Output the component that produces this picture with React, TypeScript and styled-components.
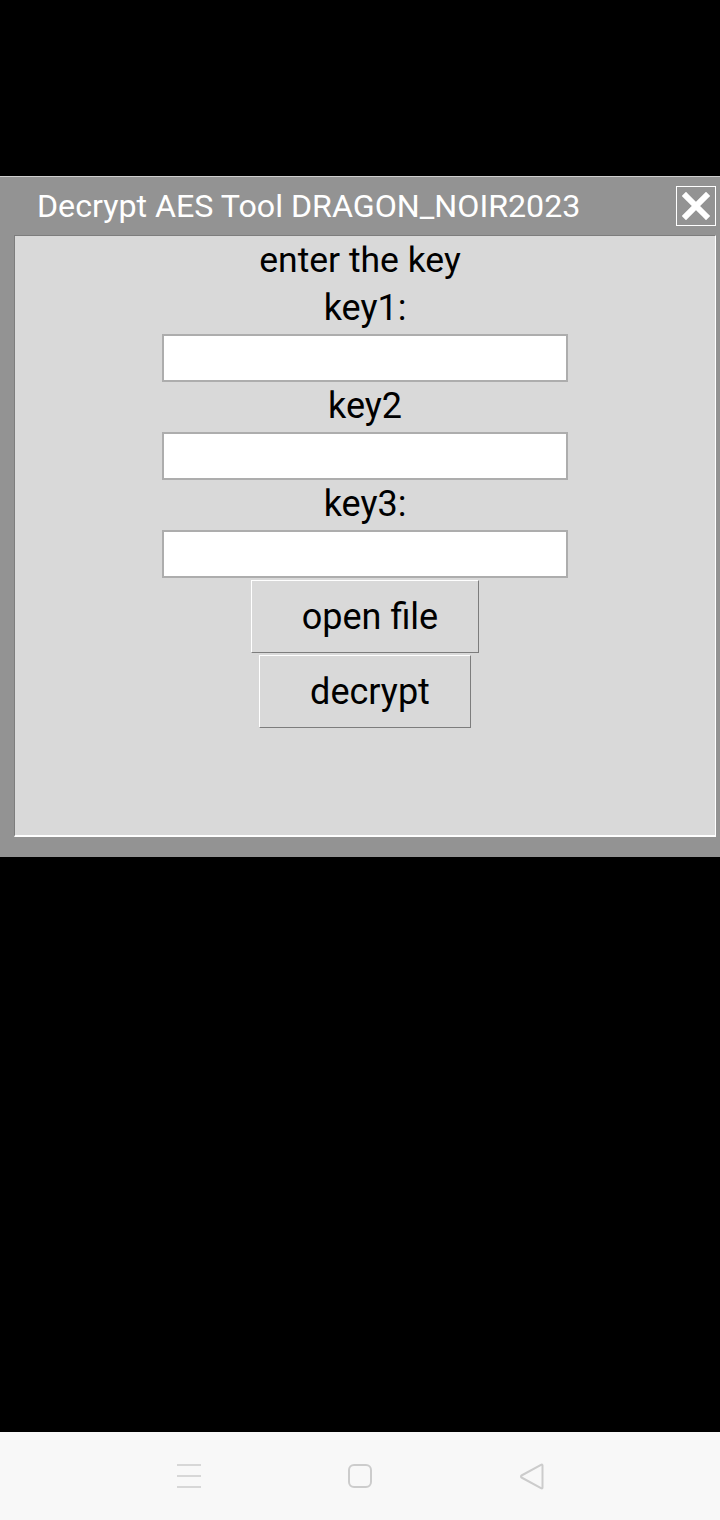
import React from "react";
import styled, { createGlobalStyle } from "styled-components";

const Global = createGlobalStyle`
  html, body { margin: 0; padding: 0; background: #000; }
  body { font-family: Roboto, "Noto Sans", Arial, sans-serif; }
  * { box-sizing: border-box; }
`;

const Screen = styled.div`
  width: 720px;
  height: 1520px;
  display: flex;
  flex-direction: column;
  background: #000;
  overflow: hidden;
`;

const TopSpace = styled.div`
  height: 176px;
  flex: none;
`;

const Window = styled.div`
  flex: none;
  background: #939393;
  border-top: 1px solid #cfcfcf;
  padding-bottom: 20px;
`;

const TitleBar = styled.div`
  height: 58px;
  display: flex;
  align-items: center;
  justify-content: space-between;
  padding: 0 4px 0 37px;
`;

const Title = styled.div`
  color: #fff;
  font-size: 32.2px;
  white-space: nowrap;
`;

const CloseButton = styled.button`
  width: 40px;
  height: 40px;
  border: 1px solid #fff;
  background: transparent;
  padding: 0;
  display: flex;
  align-items: center;
  justify-content: center;
`;

const Panel = styled.div`
  margin: 0 4px 0 14px;
  height: 602px;
  background: #d9d9d9;
  border-top: 1px solid #7d7d7d;
  border-left: 1px solid #7d7d7d;
  border-right: 1px solid #fff;
  border-bottom: 2px solid #fff;
  display: flex;
  flex-direction: column;
  align-items: center;
`;

const Heading = styled.div`
  font-size: 35.5px;
  line-height: 44px;
  padding: 2px 0 2px;
  margin-right: 10px;
  color: #000;
`;

const Label = styled.div`
  font-size: 36px;
  line-height: 44px;
  padding: 2px 0 4px;
  color: #000;
`;

const Input = styled.input`
  width: 406px;
  height: 48px;
  background: #fff;
  border: 2px solid #adadad;
  margin: 0;
  font-size: 24px;
  outline: none;
`;

const Button = styled.button<{ $mt: number }>`
  margin-top: ${(p) => p.$mt}px;
  height: 73px;
  padding: 0 40px 0 50px;
  background: #d9d9d9;
  border-top: 1px solid #fff;
  border-left: 1px solid #fff;
  border-right: 1px solid #7d7d7d;
  border-bottom: 1px solid #7d7d7d;
  font-family: Roboto, "Noto Sans", Arial, sans-serif;
  font-size: 36px;
  color: #000;
  display: flex;
  align-items: center;
`;

const Filler = styled.div`
  flex: 1;
`;

const NavBar = styled.div`
  height: 88px;
  flex: none;
  background: #f8f8f8;
  display: flex;
  align-items: center;
  justify-content: center;
  gap: 147px;
  padding-left: 1px;
`;

const NavIcon = styled.svg`
  display: block;
`;

export default function App() {
  return (
    <>
      <Global />
      <Screen>
        <TopSpace />
        <Window>
          <TitleBar>
            <Title>Decrypt AES Tool DRAGON_NOIR2023</Title>
            <CloseButton aria-label="close">
              <svg width="28" height="28" viewBox="0 0 28 28">
                <path
                  d="M4 4 L24 24 M24 4 L4 24"
                  stroke="#fff"
                  strokeWidth="6"
                  strokeLinecap="square"
                />
              </svg>
            </CloseButton>
          </TitleBar>
          <Panel>
            <Heading>enter the key</Heading>
            <Label>key1:</Label>
            <Input />
            <Label>key2</Label>
            <Input />
            <Label>key3:</Label>
            <Input />
            <Button $mt={2}>open file</Button>
            <Button $mt={2}>decrypt</Button>
          </Panel>
        </Window>
        <Filler />
        <NavBar>
          <NavIcon width="24" height="24" viewBox="0 0 24 24">
            <path d="M0 1 H24 M0 12 H24 M0 23 H24" stroke="#cccccc" strokeWidth="1.6" />
          </NavIcon>
          <NavIcon width="24" height="24" viewBox="0 0 24 24">
            <rect x="1" y="1" width="22" height="22" rx="5" fill="none" stroke="#cccccc" strokeWidth="2" />
          </NavIcon>
          <NavIcon width="26" height="27" viewBox="0 0 26 27">
            <path
              d="M23.5 2.5 L23.5 24.5 Q23.5 26 22 25.2 L2.5 14.5 Q1.5 13.5 2.5 12.5 L22 1.8 Q23.5 1 23.5 2.5 Z"
              fill="none"
              stroke="#cccccc"
              strokeWidth="2"
              strokeLinejoin="round"
            />
          </NavIcon>
        </NavBar>
      </Screen>
    </>
  );
}
